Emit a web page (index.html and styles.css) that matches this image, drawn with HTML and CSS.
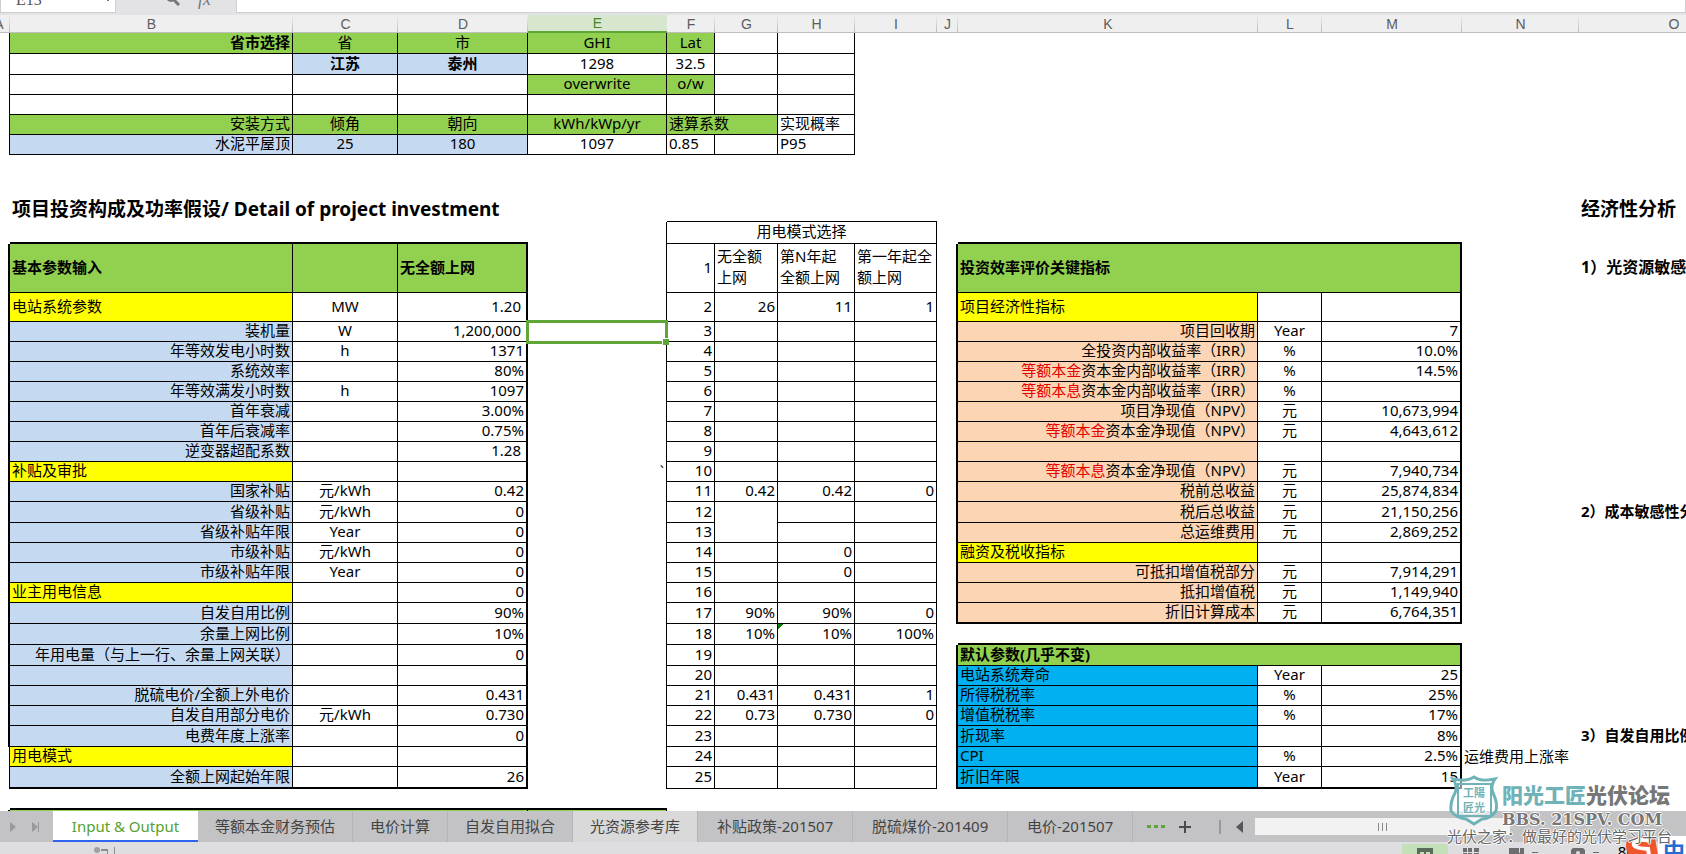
FILE: index.html
```html
<!DOCTYPE html>
<html lang="zh-CN">
<head>
<meta charset="utf-8">
<title>Input &amp; Output</title>
<link rel="stylesheet" href="styles.css">
</head>
<body>
<div class="app">
  <header class="formula-bar">
    <div class="name-box"><input class="name-input" type="text" value="E13" aria-label="名称框"><span class="name-caret"></span></div>
    <div class="formula-tools">
      <svg class="tool-lens" width="14" height="14" viewBox="0 0 14 14" aria-hidden="true"><circle cx="5" cy="5" r="4" fill="none" stroke="#77777b" stroke-width="2"/><path d="M8 8l5 5" stroke="#77777b" stroke-width="3"/></svg>
      <span class="tool-fx">fx</span>
    </div>
    <input class="formula-input" type="text" aria-label="编辑栏">
  </header>

  <main class="sheet">
    <table class="grid">
      <colgroup><col class="ca"><col class="cb"><col class="cc"><col class="cd"><col class="ce"><col class="cf"><col class="cg"><col class="ch"><col class="ci"><col class="cj"><col class="ck"><col class="cl"><col class="cm"><col class="cn"><col class="co"></colgroup>
      <thead>
        <tr><th>A</th><th>B</th><th>C</th><th>D</th><th class="on">E</th><th>F</th><th>G</th><th>H</th><th>I</th><th>J</th><th>K</th><th>L</th><th>M</th><th>N</th><th>O</th></tr>
      </thead>
      <tbody>
        <tr class="h21"><td class="e"></td><td class="x green r b">省市选择</td><td class="x green c">省</td><td class="x green c">市</td><td class="x green c">GHI</td><td class="x green c">Lat</td><td class="x"></td><td class="x"></td></tr>
        <tr class="h21"><td class="e"></td><td class="x"></td><td class="x blue c b">江苏</td><td class="x blue c b">泰州</td><td class="x c">1298</td><td class="x c">32.5</td><td class="x"></td><td class="x"></td></tr>
        <tr><td class="e"></td><td class="x"></td><td class="x"></td><td class="x"></td><td class="x green c">overwrite</td><td class="x green c">o/w</td><td class="x"></td><td class="x"></td></tr>
        <tr><td class="e"></td><td class="x"></td><td class="x"></td><td class="x"></td><td class="x"></td><td class="x"></td><td class="x"></td><td class="x"></td></tr>
        <tr><td class="e"></td><td class="x green r">安装方式</td><td class="x green c">倾角</td><td class="x green c">朝向</td><td class="x green c">kWh/kWp/yr</td><td class="x green" colspan="2">速算系数</td><td class="x">实现概率</td></tr>
        <tr><td class="e"></td><td class="x blue r">水泥平屋顶</td><td class="x blue c">25</td><td class="x blue c">180</td><td class="x c">1097</td><td class="x">0.85</td><td class="x"></td><td class="x">P95</td></tr>
        <tr class="h40"><td colspan="15"></td></tr>
        <tr class="h27"><td></td><td class="title" colspan="4">项目投资构成及功率假设/ Detail of project investment</td><td class="u" colspan="4"></td><td colspan="5"></td><td class="title">经济性分析</td></tr>
        <tr class="h22"><td></td><td class="u2" colspan="3"></td><td class="e"></td><td class="x c" colspan="4">用电模式选择</td><td></td><td class="u2" colspan="3"></td></tr>
        <tr class="h49"><td class="e2"></td><td class="x green b">基本参数输入</td><td class="x green"></td><td class="x e2 green b">无全额上网</td><td class="e"></td><td class="x r">1</td><td class="x">无全额<br>上网</td><td class="x">第N年起<br>全额上网</td><td class="x">第一年起全<br>额上网</td><td class="e2"></td><td class="x e2 green b" colspan="3">投资效率评价关键指标</td><td></td><td class="b note">1）光资源敏感性分析</td></tr>
        <tr class="h29"><td class="e2"></td><td class="x yellow">电站系统参数</td><td class="x c">MW</td><td class="x e2 r pad">1.20</td><td class="e"></td><td class="x r">2</td><td class="x r">26</td><td class="x r">11</td><td class="x r">1</td><td class="e2"></td><td class="x yellow">项目经济性指标</td><td class="x"></td><td class="x e2"></td></tr>
        <tr><td class="e2"></td><td class="x blue r">装机量</td><td class="x c">W</td><td class="x e2 r pad">1,200,000</td><td class="e active"><span class="cursor"></span></td><td class="x r">3</td><td class="x"></td><td class="x"></td><td class="x"></td><td class="e2"></td><td class="x peach r">项目回收期</td><td class="x c">Year</td><td class="x e2 r">7</td></tr>
        <tr><td class="e2"></td><td class="x blue r">年等效发电小时数</td><td class="x c">h</td><td class="x e2 r">1371</td><td class="e"></td><td class="x r">4</td><td class="x"></td><td class="x"></td><td class="x"></td><td class="e2"></td><td class="x peach r">全投资内部收益率（IRR）</td><td class="x c">%</td><td class="x e2 r">10.0%</td></tr>
        <tr><td class="e2"></td><td class="x blue r">系统效率</td><td class="x"></td><td class="x e2 r">80%</td><td class="e"></td><td class="x r">5</td><td class="x"></td><td class="x"></td><td class="x"></td><td class="e2"></td><td class="x peach r"><span class="red">等额本金</span>资本金内部收益率（IRR）</td><td class="x c">%</td><td class="x e2 r">14.5%</td></tr>
        <tr><td class="e2"></td><td class="x blue r">年等效满发小时数</td><td class="x c">h</td><td class="x e2 r">1097</td><td class="e"></td><td class="x r">6</td><td class="x"></td><td class="x"></td><td class="x"></td><td class="e2"></td><td class="x peach r"><span class="red">等额本息</span>资本金内部收益率（IRR）</td><td class="x c">%</td><td class="x e2"></td></tr>
        <tr><td class="e2"></td><td class="x blue r">首年衰减</td><td class="x"></td><td class="x e2 r">3.00%</td><td class="e"></td><td class="x r">7</td><td class="x"></td><td class="x"></td><td class="x"></td><td class="e2"></td><td class="x peach r">项目净现值（NPV）</td><td class="x c">元</td><td class="x e2 r">10,673,994</td></tr>
        <tr><td class="e2"></td><td class="x blue r">首年后衰减率</td><td class="x"></td><td class="x e2 r">0.75%</td><td class="e"></td><td class="x r">8</td><td class="x"></td><td class="x"></td><td class="x"></td><td class="e2"></td><td class="x peach r"><span class="red">等额本金</span>资本金净现值（NPV）</td><td class="x c">元</td><td class="x e2 r">4,643,612</td></tr>
        <tr><td class="e2"></td><td class="x blue r">逆变器超配系数</td><td class="x"></td><td class="x e2 r pad">1.28</td><td class="e"></td><td class="x r">9</td><td class="x"></td><td class="x"></td><td class="x"></td><td class="e2"></td><td class="x peach"></td><td class="x"></td><td class="x e2"></td></tr>
        <tr><td class="e2"></td><td class="x yellow">补贴及审批</td><td class="x"></td><td class="x e2"></td><td class="e r">`</td><td class="x r">10</td><td class="x"></td><td class="x"></td><td class="x"></td><td class="e2"></td><td class="x peach r"><span class="red">等额本息</span>资本金净现值（NPV）</td><td class="x c">元</td><td class="x e2 r">7,940,734</td></tr>
        <tr><td class="e2"></td><td class="x blue r">国家补贴</td><td class="x c">元/kWh</td><td class="x e2 r">0.42</td><td class="e"></td><td class="x r">11</td><td class="x r">0.42</td><td class="x r">0.42</td><td class="x r">0</td><td class="e2"></td><td class="x peach r">税前总收益</td><td class="x c">元</td><td class="x e2 r">25,874,834</td></tr>
        <tr class="h21"><td class="e2"></td><td class="x blue r">省级补贴</td><td class="x c">元/kWh</td><td class="x e2 r">0</td><td class="e"></td><td class="x r">12</td><td class="x" rowspan="2"></td><td class="x"></td><td class="x"></td><td class="e2"></td><td class="x peach r">税后总收益</td><td class="x c">元</td><td class="x e2 r">21,150,256</td><td></td><td class="b">2）成本敏感性分析</td></tr>
        <tr><td class="e2"></td><td class="x blue r">省级补贴年限</td><td class="x c">Year</td><td class="x e2 r">0</td><td class="e"></td><td class="x r">13</td><td class="x"></td><td class="x"></td><td class="e2"></td><td class="x peach r">总运维费用</td><td class="x c">元</td><td class="x e2 r">2,869,252</td></tr>
        <tr><td class="e2"></td><td class="x blue r">市级补贴</td><td class="x c">元/kWh</td><td class="x e2 r">0</td><td class="e"></td><td class="x r">14</td><td class="x"></td><td class="x r">0</td><td class="x"></td><td class="e2"></td><td class="x yellow">融资及税收指标</td><td class="x"></td><td class="x e2"></td></tr>
        <tr><td class="e2"></td><td class="x blue r">市级补贴年限</td><td class="x c">Year</td><td class="x e2 r">0</td><td class="e"></td><td class="x r">15</td><td class="x"></td><td class="x r">0</td><td class="x"></td><td class="e2"></td><td class="x peach r">可抵扣增值税部分</td><td class="x c">元</td><td class="x e2 r">7,914,291</td></tr>
        <tr><td class="e2"></td><td class="x yellow">业主用电信息</td><td class="x"></td><td class="x e2 r">0</td><td class="e"></td><td class="x r">16</td><td class="x"></td><td class="x"></td><td class="x"></td><td class="e2"></td><td class="x peach r">抵扣增值税</td><td class="x c">元</td><td class="x e2 r">1,149,940</td></tr>
        <tr class="h21"><td class="e2"></td><td class="x blue r">自发自用比例</td><td class="x"></td><td class="x e2 r">90%</td><td class="e"></td><td class="x r">17</td><td class="x r">90%</td><td class="x r">90%</td><td class="x r">0</td><td class="e2"></td><td class="x u2 peach r">折旧计算成本</td><td class="x u2 c">元</td><td class="x e2 u2 r">6,764,351</td></tr>
        <tr class="h21"><td class="e2"></td><td class="x blue r">余量上网比例</td><td class="x"></td><td class="x e2 r">10%</td><td class="e"></td><td class="x r">18</td><td class="x r">10%</td><td class="x r flag">10%</td><td class="x r">100%</td><td></td><td class="u2" colspan="3"></td></tr>
        <tr class="h21"><td class="e2"></td><td class="x blue r">年用电量（与上一行、余量上网关联）</td><td class="x"></td><td class="x e2 r">0</td><td class="e"></td><td class="x r">19</td><td class="x"></td><td class="x"></td><td class="x"></td><td class="e2"></td><td class="x e2 green b" colspan="3">默认参数(几乎不变)</td></tr>
        <tr><td class="e2"></td><td class="x blue"></td><td class="x"></td><td class="x e2"></td><td class="e"></td><td class="x r">20</td><td class="x"></td><td class="x"></td><td class="x"></td><td class="e2"></td><td class="x cyan">电站系统寿命</td><td class="x c">Year</td><td class="x e2 r">25</td></tr>
        <tr><td class="e2"></td><td class="x blue r">脱硫电价/全额上外电价</td><td class="x"></td><td class="x e2 r">0.431</td><td class="e"></td><td class="x r">21</td><td class="x r">0.431</td><td class="x r">0.431</td><td class="x r">1</td><td class="e2"></td><td class="x cyan">所得税税率</td><td class="x c">%</td><td class="x e2 r">25%</td></tr>
        <tr><td class="e2"></td><td class="x blue r">自发自用部分电价</td><td class="x c">元/kWh</td><td class="x e2 r">0.730</td><td class="e"></td><td class="x r">22</td><td class="x r">0.73</td><td class="x r">0.730</td><td class="x r">0</td><td class="e2"></td><td class="x cyan">增值税税率</td><td class="x c">%</td><td class="x e2 r">17%</td></tr>
        <tr class="h21"><td class="e2"></td><td class="x blue r">电费年度上涨率</td><td class="x"></td><td class="x e2 r">0</td><td class="e"></td><td class="x r">23</td><td class="x"></td><td class="x"></td><td class="x"></td><td class="e2"></td><td class="x cyan">折现率</td><td class="x"></td><td class="x e2 r">8%</td><td></td><td class="b">3）自发自用比例敏感性分析</td></tr>
        <tr><td class="e"></td><td class="x yellow">用电模式</td><td class="x"></td><td class="x e2"></td><td class="e"></td><td class="x r">24</td><td class="x"></td><td class="x"></td><td class="x"></td><td class="e2"></td><td class="x cyan">CPI</td><td class="x c">%</td><td class="x e2 r">2.5%</td><td>运维费用上涨率</td></tr>
        <tr class="h22"><td class="e"></td><td class="x u2 blue r">全额上网起始年限</td><td class="x u2"></td><td class="x e2 u2 r">26</td><td class="e"></td><td class="x r">25</td><td class="x"></td><td class="x"></td><td class="x"></td><td class="e2"></td><td class="x u2 cyan">折旧年限</td><td class="x u2 c">Year</td><td class="x e2 u2 r">15</td></tr>
        <tr class="h21"><td></td><td class="u2" colspan="4"></td></tr>
        <tr class="h21"><td class="e2"></td><td class="x green" colspan="3"></td><td class="x green"></td></tr>
      </tbody>
    </table>
  </main>

  <footer class="bottom">
    <nav class="tabs" aria-label="工作表">
      <div class="tab-move">
        <button class="move" type="button" aria-label="下一个"><svg width="6" height="10" viewBox="0 0 6 10"><path d="M0 0l6 5-6 5z" fill="#99999b"/></svg></button>
        <button class="move" type="button" aria-label="最后一个"><svg width="8" height="10" viewBox="0 0 8 10"><path d="M0 0l6 5-6 5zM6 0h1v10H6z" fill="#99999b"/></svg></button>
      </div>
      <button class="tab current" type="button">Input &amp; Output</button>
      <button class="tab" type="button">等额本金财务预估</button>
      <button class="tab" type="button">电价计算</button>
      <button class="tab" type="button">自发自用拟合</button>
      <button class="tab hover" type="button">光资源参考库</button>
      <button class="tab wide" type="button">补贴政策-201507</button>
      <button class="tab wide" type="button">脱硫煤价-201409</button>
      <button class="tab dated" type="button">电价-201507</button>
      <button class="tab-more" type="button" aria-label="更多"><i></i><i></i><i></i></button>
      <button class="tab-add" type="button" aria-label="新建"><svg width="12" height="12" viewBox="0 0 12 12"><path d="M5 0h2v5h5v2H7v5H5V7H0V5h5z" fill="#4a4a4c"/></svg></button>
      <span class="splitter"></span>
      <button class="scroll-left" type="button" aria-label="向左"><svg width="7" height="12" viewBox="0 0 7 12"><path d="M7 0v12L0 6z" fill="#55555a"/></svg></button>
      <div class="thumb"><i></i><i></i><i></i></div>
    </nav>
    <div class="status">
      <svg class="macro" width="24" height="7" viewBox="0 0 24 7" aria-hidden="true"><circle cx="3" cy="3" r="3" fill="#a0a0a2"/><path d="M7 2h7v5h-1V4H7zM20 0h1v7h-1z" fill="#8c8c8e"/></svg>
      <div class="views">
        <span class="view chosen"><svg width="16" height="6" viewBox="0 0 16 6"><path d="M0 0h16v6H13V4H9v2H7V4H3v2H0z" fill="#5c6a58"/></svg></span>
        <span class="view"><svg width="16" height="6" viewBox="0 0 16 6"><path d="M0 0h4v4H0zM5 0h4v4H5zM11 0h5v4h-5zM0 5h4v1H0zM5 5h4v1H5zM11 5h5v1h-5z" fill="#6d6d6f"/></svg></span>
        <span class="view"><svg width="32" height="6" viewBox="0 0 32 6"><path d="M0 0h15v6H0zM23 4h6v1h-6z" fill="#6d6d6f"/><path d="M10 0h1v5h-1z" fill="#dedee0"/></svg></span>
        <span class="view"><svg width="32" height="6" viewBox="0 0 32 6"><path d="M2 0h10l2 2v4H0V2z" fill="#6d6d6f"/><circle cx="7" cy="5" r="2" fill="#dedee0"/><path d="M22 4h6v1h-6z" fill="#6d6d6f"/></svg></span>
        <span class="zoom-level">80</span>
      </div>
    </div>
  </footer>

  <div class="ime">
    <svg width="34" height="20" viewBox="0 0 34 20" aria-hidden="true"><path d="M3 6Q16-3 31 3l3 17H5Q0 12 3 6z" fill="#f0562b"/><path d="M27 6Q12 3 10 8t14 6l1 6" fill="none" stroke="#fff" stroke-width="4"/></svg>
    <span class="ime-mode">中</span>
  </div>

  <div class="watermark">
    <svg class="shield" width="53" height="52" viewBox="0 0 53 52" aria-hidden="true"><path d="M27 2Q34 7 48 4Q43 11 46 18Q51 28 49 36Q43 44 35 44L27 49L19 44Q9 43 4 36Q3 27 8 18Q11 11 6 4Q19 7 27 2z" fill="#ffffff88" stroke="#6fb3b8" stroke-width="3"/><path d="M11 9h33v32H11z" fill="none" stroke="#6fb3b8" stroke-width="2"/><text x="16" y="22">工陽</text><text x="16" y="37">匠光</text></svg>
    <div class="wm-name"><span class="wm-teal">阳光工匠</span>光伏论坛</div>
    <div class="wm-site">BBS. 21SPV. COM</div>
    <div class="wm-slogan">光伏之家：做最好的光伏学习平台</div>
  </div>
</div>
</body>
</html>
```

FILE: styles.css
```css
* { box-sizing: border-box; }

body {
  margin: 0;
  font: 15px/19px "Noto Sans", "Noto Sans CJK SC", sans-serif;
  color: #000;
  background: #fff;
}

button, input { font: inherit; color: inherit; border: 0; margin: 0; padding: 0; background: none; }
button { display: flex; align-items: center; justify-content: center; }

.app { position: relative; display: flex; flex-direction: column; height: 100vh; overflow: hidden; }

/* Formula bar */
.formula-bar { display: flex; align-items: flex-end; height: 15px; flex: none; overflow: hidden; background: #e3e3e6; padding-bottom: 2px; }
.name-box { display: flex; align-items: center; width: 116px; height: 26px; background: #fff; border: 1px solid #cdcdd2; }
.name-input { width: 90px; height: 24px; padding-left: 15px; font: 16px "Liberation Serif", serif; color: #55555a; }
.name-caret { width: 2px; height: 2px; margin-left: 16px; background: #77777b; }
.formula-tools { display: flex; align-items: center; gap: 18px; width: 120px; height: 28px; padding-left: 50px; }
.tool-fx { font: italic 18px "Liberation Serif", serif; color: #77777b; }
.formula-input { flex: 1; height: 26px; background: #fff; border: 1px solid #cdcdd2; }

/* Worksheet */
.sheet { flex: 1; min-height: 0; overflow: hidden; }
.grid { width: 1781px; margin-left: -12px; table-layout: fixed; border-collapse: separate; border-spacing: 0; }
.ca { width: 22px; } .cb { width: 283px; } .cc { width: 105px; } .cd { width: 130px; }
.ce { width: 139px; } .cf { width: 48px; } .cg { width: 63px; } .ch { width: 77px; }
.ci { width: 82px; } .cj { width: 21px; } .ck { width: 300px; } .cl { width: 64px; }
.cm { width: 140px; } .cn { width: 117px; } .co { width: 190px; }

th {
  height: 18px; padding: 0; font: 14px/16px "Liberation Sans", sans-serif; color: #5c5c60;
  background: linear-gradient(#efefef, #bcbcbe) right / 1px 100% no-repeat #efefef;
  border-bottom: 1px solid #bfbfbf;
}
th.on { background: #d6e6cf; color: #3f8a22; border-bottom: 2px solid #5fa637; }

tbody tr { height: 20px; }
tbody .h21 { height: 21px; }
tbody .h22 { height: 22px; }
tbody .h27 { height: 27px; }
tbody .h29 { height: 29px; }
tbody .h40 { height: 40px; }
tbody .h49 { height: 49px; }

td { padding: 0 2px 2px; white-space: nowrap; border: 0 solid #000; line-height: 17px; }
.h49 td { line-height: 21px; }
.x { border-right-width: 1px; border-bottom-width: 1px; }
.e { border-right-width: 1px; }
.e2 { border-right-width: 2px; }
.u { border-bottom-width: 1px; }
.u2 { border-bottom-width: 2px; }
.c { text-align: center; }
.r { text-align: right; }
.b { font-weight: bold; }
.pad { padding-right: 5px; }
.green { background: #92d050; }
.blue { background: #c5d9f1; }
.yellow { background: #ff0; }
.peach { background: #fcd5b4; }
.cyan { background: #00b0f0; }
.red { color: #e60000; }
.title { padding-bottom: 0; font-size: 19px; font-weight: bold; line-height: 26px; }
.note { font-size: 16px; }
.flag { background: linear-gradient(135deg, #0a7d0a 4px, transparent 4px); }

.active { position: relative; }
.cursor { position: absolute; inset: -2px -2px -2px -2px; border: 3px solid #5fa637; }
.cursor::after { content: ""; position: absolute; right: -4px; bottom: -4px; width: 6px; height: 6px; background: #5fa637; border-top: 1px solid #fff; border-left: 1px solid #fff; }

/* Sheet tabs */
.bottom { flex: none; background: #dedee0; }
.tabs { display: flex; align-items: stretch; height: 31px; background: #c3c3c6; color: #444; }
.tab-move { display: flex; flex: none; gap: 16px; width: 53px; padding-left: 10px; }
.tab { flex: none; padding: 0 17px; border-right: 1px solid #b4b4b8; }
.tab.current { min-width: 145px; padding-top: 2px; background: #fff; color: #56a132; border-right: 0; border-bottom: 2px solid #2f62f0; }
.tab.hover { background: #d9d9d9; }
.tab.wide { min-width: 155px; }
.tab.dated { min-width: 125px; }
.tab-more { gap: 3px; padding: 0 14px; }
.tab-more i { width: 4px; height: 3px; background: #5fa637; }
.tab-add { margin-right: 28px; }
.splitter { width: 2px; height: 14px; margin: 9px 15px 0 0; background: #99999b; }
.thumb { display: flex; align-items: center; justify-content: center; gap: 3px; width: 255px; height: 17px; margin: 7px 0 0 12px; background: #f2f2f2; }
.thumb i { width: 1px; height: 8px; background: #88888a; }

.status { display: flex; justify-content: space-between; height: 12px; overflow: hidden; }
.macro { margin: 5px 0 0 94px; }
.views { display: flex; align-items: flex-start; padding: 2px 51px 0 0; }
.view { height: 10px; padding: 4px 15px 0; display: flex; }
.view.chosen { background: #c4e0b8; }
.zoom-level { line-height: 14px; }

/* Input method badge */
.ime { position: absolute; right: 0; bottom: 0; display: flex; height: 19px; width: 62px; overflow: hidden; }
.ime-mode { flex: 1; margin-top: 1px; padding-left: 5px; background: #fff; color: #1f6fd0; font-size: 22px; line-height: 28px; font-weight: bold; border-radius: 4px 0 0 0; }

/* Forum stamp */
.watermark {
  position: absolute; right: 13px; bottom: 10px; width: 226px;
  display: grid; grid-template-columns: 55px 1fr; grid-template-rows: 36px 17px 16px;
  color: #777; white-space: nowrap;
  text-shadow: 1px 0 #fff, -1px 0 #fff, 0 1px #fff, 0 -1px #fff;
}
.shield { grid-row: 1 / 3; }
.shield text { font: bold 11px "Noto Sans CJK SC", sans-serif; fill: #6fb3b8; }
.wm-name { font: 900 21px/38px "Noto Sans CJK SC", sans-serif; }
.wm-teal { color: #6fb3b8; }
.wm-site { font: bold 16px/17px "DejaVu Serif", serif; }
.wm-slogan { grid-column: 1 / 3; color: #666; font-size: 15px; line-height: 16px; }
```
